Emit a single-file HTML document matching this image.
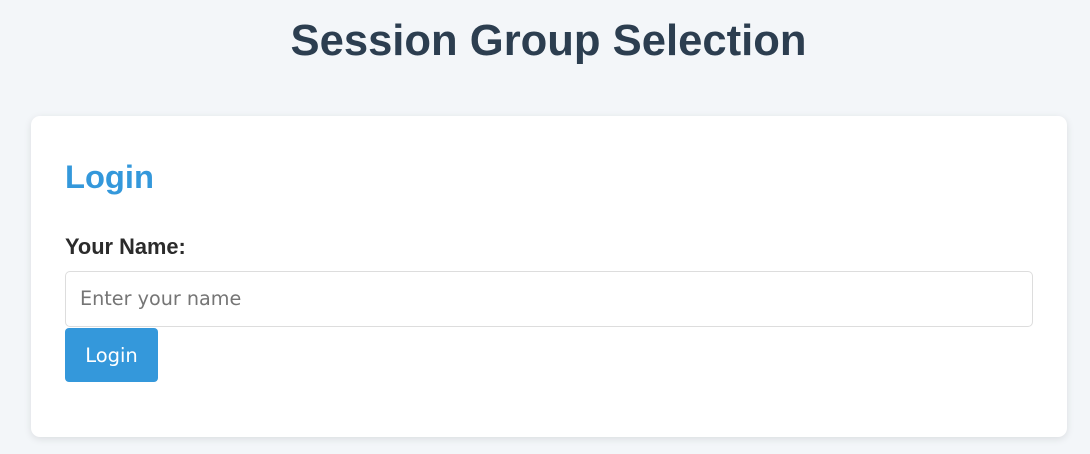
<!DOCTYPE html>
<html><head><meta charset="utf-8"><style>
html,body{margin:0;padding:0;background:#f3f6f9;width:1090px;height:454px;overflow:hidden;font-family:"Liberation Sans",Arial,sans-serif;}
h1{position:absolute;left:0;right:0;top:14px;margin:0;text-align:center;font-size:43.6px;font-weight:bold;color:#2c3e50;line-height:54px;padding-left:7px;}
.card{position:absolute;left:31px;top:116px;width:1036px;height:321px;background:#fff;border-radius:9px;box-shadow:0 2px 8px rgba(0,0,0,0.1);}
h2{position:absolute;left:34px;top:41px;margin:0;font-size:32.7px;color:#3498db;line-height:40px;font-weight:bold;}
label{position:absolute;left:34px;top:118px;font-size:21.8px;font-weight:bold;color:#2b2b2b;}
.inp{position:absolute;left:34px;top:155px;width:966px;height:54px;border:1px solid #ddd;border-radius:5px;box-sizing:content-box;}
.inp span{position:absolute;left:14px;top:15px;font-family:"DejaVu Sans",sans-serif;font-size:19.2px;color:#757575;}
.btn{position:absolute;left:34px;top:213px;width:93px;height:54px;background:#3498db;border-radius:4px;color:#fff;font-family:"DejaVu Sans",sans-serif;font-size:19.5px;line-height:54px;text-align:center;}
</style></head><body>
<h1>Session Group Selection</h1>
<div class="card">
<h2>Login</h2>
<label>Your Name:</label>
<div class="inp"><span>Enter your name</span></div>
<div class="btn" style="top:212px"><span style="position:relative;top:1px">Login</span></div>
</div>
</body></html>
